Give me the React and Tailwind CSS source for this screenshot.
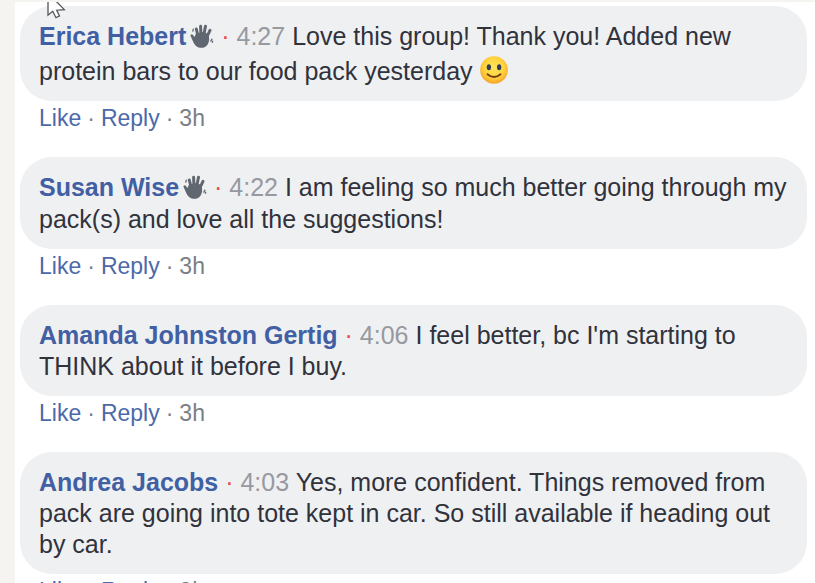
import { useState } from "react";

const comments = [
	{
		name: "Erica Hebert",
		wave: true,
		time: "4:27",
		text: "Love this group! Thank you! Added new protein bars to our food pack yesterday",
		smile: true,
	},
	{
		name: "Susan Wise",
		wave: true,
		time: "4:22",
		text: "I am feeling so much better going through my pack(s) and love all the suggestions!",
	},
	{
		name: "Amanda Johnston Gertig",
		time: "4:06",
		text: "I feel better, bc I'm starting to THINK about it before I buy.",
	},
	{
		name: "Andrea Jacobs",
		time: "4:03",
		text: "Yes, more confident. Things removed from pack are going into tote kept in car. So still available if heading out by car.",
	},
];

function WaveIcon() {
	return (
		<svg
			viewBox="0 0 24 24"
			className="mb-[5px] ml-1 inline-block h-6 w-6 align-[-8px]"
			fill="none"
			stroke="#606770"
			strokeLinecap="round"
			role="img"
			aria-label="New member"
		>
			<path
				d="M4.500 13 6 9.500 13 8 18.500 10 19.200 15C18.800 20.500 16 23.800 11.500 23.800 7.500 23.800 4.800 21.500 3.500 18.500L.6 12C0 10.300 1.800 9.500 2.800 10.700z"
				fill="#606770"
				stroke="none"
			/>
			<path
				d="M8.500 14 6.300 5M11 12 10.600 2.300M13.600 12 15.500 2.300M16.300 14 20 6.300"
				strokeWidth="3"
			/>
			<path
				d="M2.800 7.200 3.300 5.200M20.800 17.200 22 15.200M22.300 18.200 22.800 17.300"
				strokeWidth="1.300"
			/>
		</svg>
	);
}

function SmileIcon() {
	return (
		<svg
			viewBox="0 0 30 30"
			className="mt-[3px] inline-block h-7 w-7 align-[-4px]"
			role="img"
			aria-label="Smile"
		>
			<defs>
				<radialGradient id="face" cx="50%" cy="42%" r="56%">
					<stop offset="0" stopColor="#ffe45c" />
					<stop offset="0.65" stopColor="#ffd43c" />
					<stop offset="1" stopColor="#f7a52b" />
				</radialGradient>
			</defs>
			<circle cx="15" cy="15" r="14.800" fill="url(#face)" />
			<ellipse cx="9.500" cy="12" rx="2.300" ry="3.200" fill="#343d57" />
			<ellipse cx="20.500" cy="12" rx="2.300" ry="3.200" fill="#343d57" />
			<path
				d="M8 19.500Q15 25.500 22 19.500"
				fill="none"
				stroke="#743c17"
				strokeWidth="2"
				strokeLinecap="round"
			/>
		</svg>
	);
}

function Pointer() {
	return (
		<svg
			viewBox="0 0 20 20"
			className="pointer-events-none absolute left-8 -top-0.5 h-5 w-5"
			aria-hidden="true"
		>
			<path
				d="M1-4V15.200L5.700 11.200 9 17.700 12.500 16 9.700 10.200 17.300 9.600 4-4"
				fill="#fff"
				stroke="#55565c"
				strokeWidth="1.300"
			/>
		</svg>
	);
}

function Comment({ comment }) {
	const [liked, setLiked] = useState(false);

	return (
		<li>
			<div className="rounded-[32px] bg-[#eff0f2] pb-[14px] pl-[19px] pr-4 pt-[15px] text-[25px] leading-[31px] text-[#30323c]">
				<a href="#profile" className="font-bold text-[#4160a3]">
					{comment.name}
				</a>
				{comment.wave && <WaveIcon />}
				<span className="text-[#f0483e]"> · </span>
				<span className="text-[#9799a1]">{comment.time}</span>{" "}
				{comment.text}
				{comment.smile && (
					<>
						{" "}
						<SmileIcon />
					</>
				)}
			</div>
			<div className="flex gap-1.5 pl-[19px] pt-[3px] text-[23px] leading-7 text-[#7b7e85]">
				<button
					type="button"
					aria-pressed={liked}
					onClick={() => setLiked(!liked)}
					className="cursor-pointer text-[#4c69a9]"
				>
					Like
				</button>
				<span>·</span>
				<button
					type="button"
					className="cursor-pointer text-[#4c69a9]"
				>
					Reply
				</button>
				<span>·</span>
				<span>3h</span>
			</div>
		</li>
	);
}

export default function App() {
	return (
		<div className="relative h-screen overflow-hidden border-l-[15px] border-t-2 border-[#f6f4f0] bg-white font-['Liberation_Sans',Arial,sans-serif]">
			<ul className="flex flex-col gap-[25px] pl-[5px] pr-2 pt-1">
				{comments.map((comment) => (
					<Comment key={comment.name} comment={comment} />
				))}
			</ul>
			<Pointer />
		</div>
	);
}
